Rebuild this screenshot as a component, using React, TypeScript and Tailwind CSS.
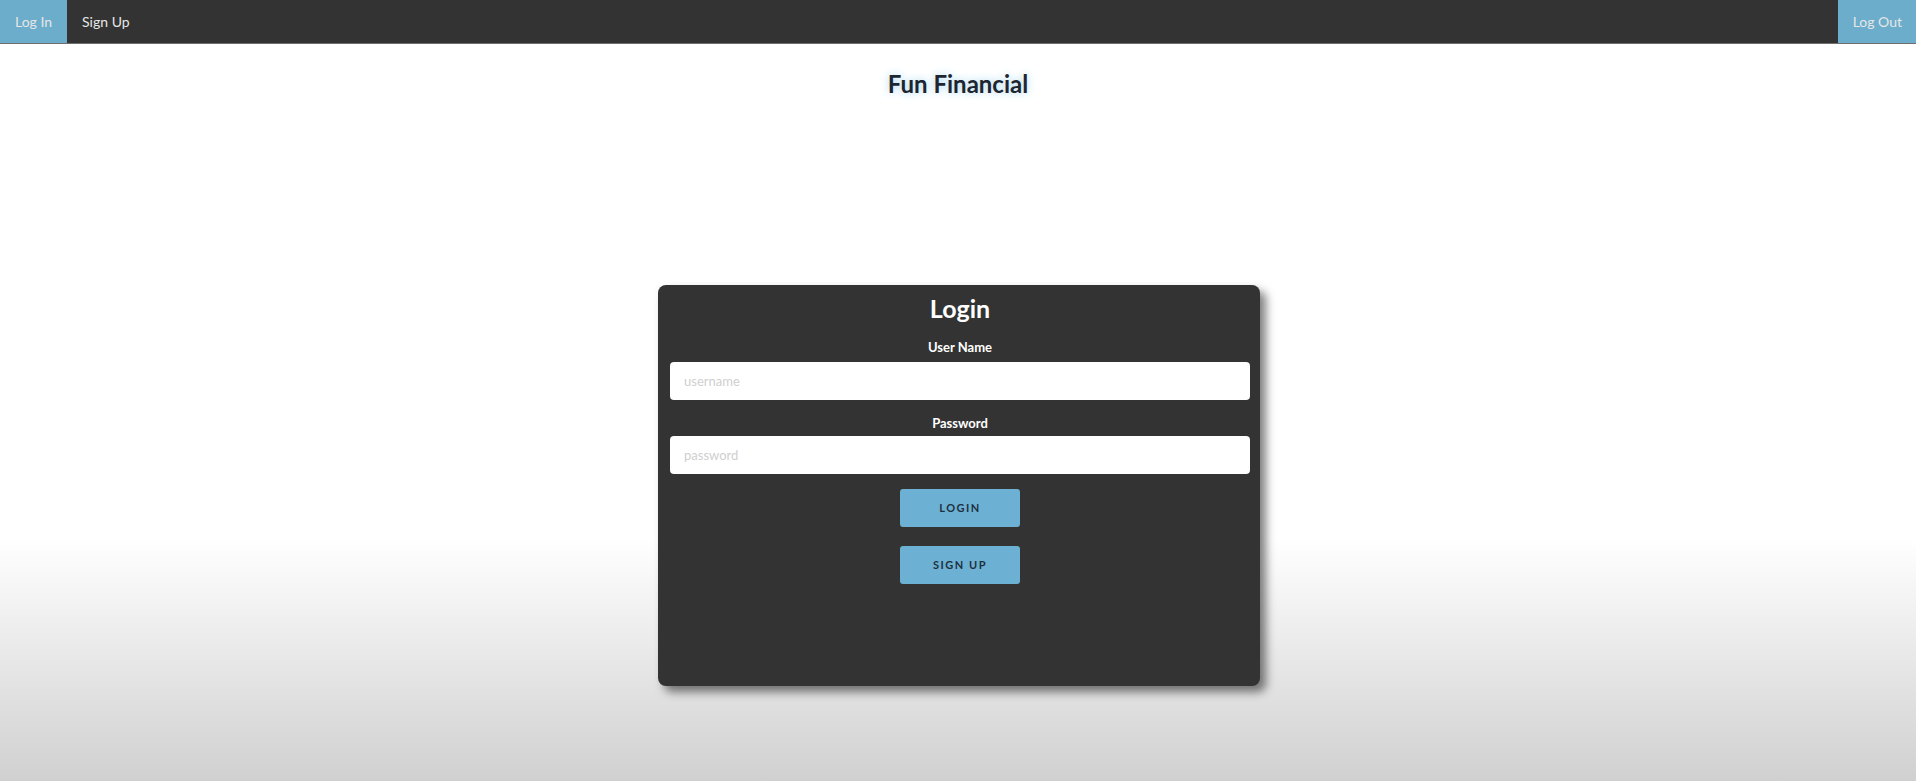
const App = () => {
    return (
        <div className="min-h-screen bg-[linear-gradient(to_bottom,#ffffff_0%,#ffffff_69%,#d0d0d0_100%)] font-['Lato','Open_Sans',sans-serif]">
            <nav className="h-[44px] bg-[#333333] flex items-stretch text-[14px] text-[#e6e6e6] border-b border-[#6e6e6e]">
                <a className="px-[15px] flex items-center bg-[#6cadcc] cursor-pointer">Log In</a>
                <a className="px-[15px] flex items-center cursor-pointer">Sign Up</a>
                <div className="flex-1" />
                <a className="pl-[15px] pr-[14px] flex items-center bg-[#6cadcc] cursor-pointer">Log Out</a>
            </nav>

            <h1 className="mt-[23px] text-center text-[24px] leading-[33px] font-bold text-[#1d2630] [text-shadow:0_0_8px_#9fd3ec]">
                Fun Financial
            </h1>

            <div className="mx-auto mt-[185px] w-[602px] h-[401px] rounded-lg bg-[#333333] shadow-[6px_6px_10px_rgba(0,0,0,0.5)] pl-[12px] pr-[10px] pt-[8px] flex flex-col text-white translate-x-[1px]">
                <div className="text-center text-[25px] leading-[31px] font-bold">Login</div>

                <label className="mt-[13px] text-center text-[13px] leading-[20px] font-bold">User Name</label>
                <input
                    className="mt-[5px] h-[38px] w-full rounded bg-white px-[14px] text-[13px] text-black placeholder:text-[#cfcfcf] outline-none"
                    placeholder="username"
                />

                <label className="mt-[13px] text-center text-[13px] leading-[20px] font-bold">Password</label>
                <input
                    type="password"
                    className="mt-[3px] h-[38px] w-full rounded bg-white px-[14px] text-[13px] text-black placeholder:text-[#cfcfcf] outline-none"
                    placeholder="password"
                />

                <button className="mx-auto mt-[15px] w-[120px] h-[38px] rounded-[3px] bg-[#6cb0d3] text-[11px] font-bold tracking-[1.5px] text-[#1e3040]">
                    LOGIN
                </button>
                <button className="mx-auto mt-[19px] w-[120px] h-[38px] rounded-[3px] bg-[#6cb0d3] text-[11px] font-bold tracking-[1.5px] text-[#1e3040]">
                    SIGN UP
                </button>
            </div>
        </div>
    )
}
export default App
